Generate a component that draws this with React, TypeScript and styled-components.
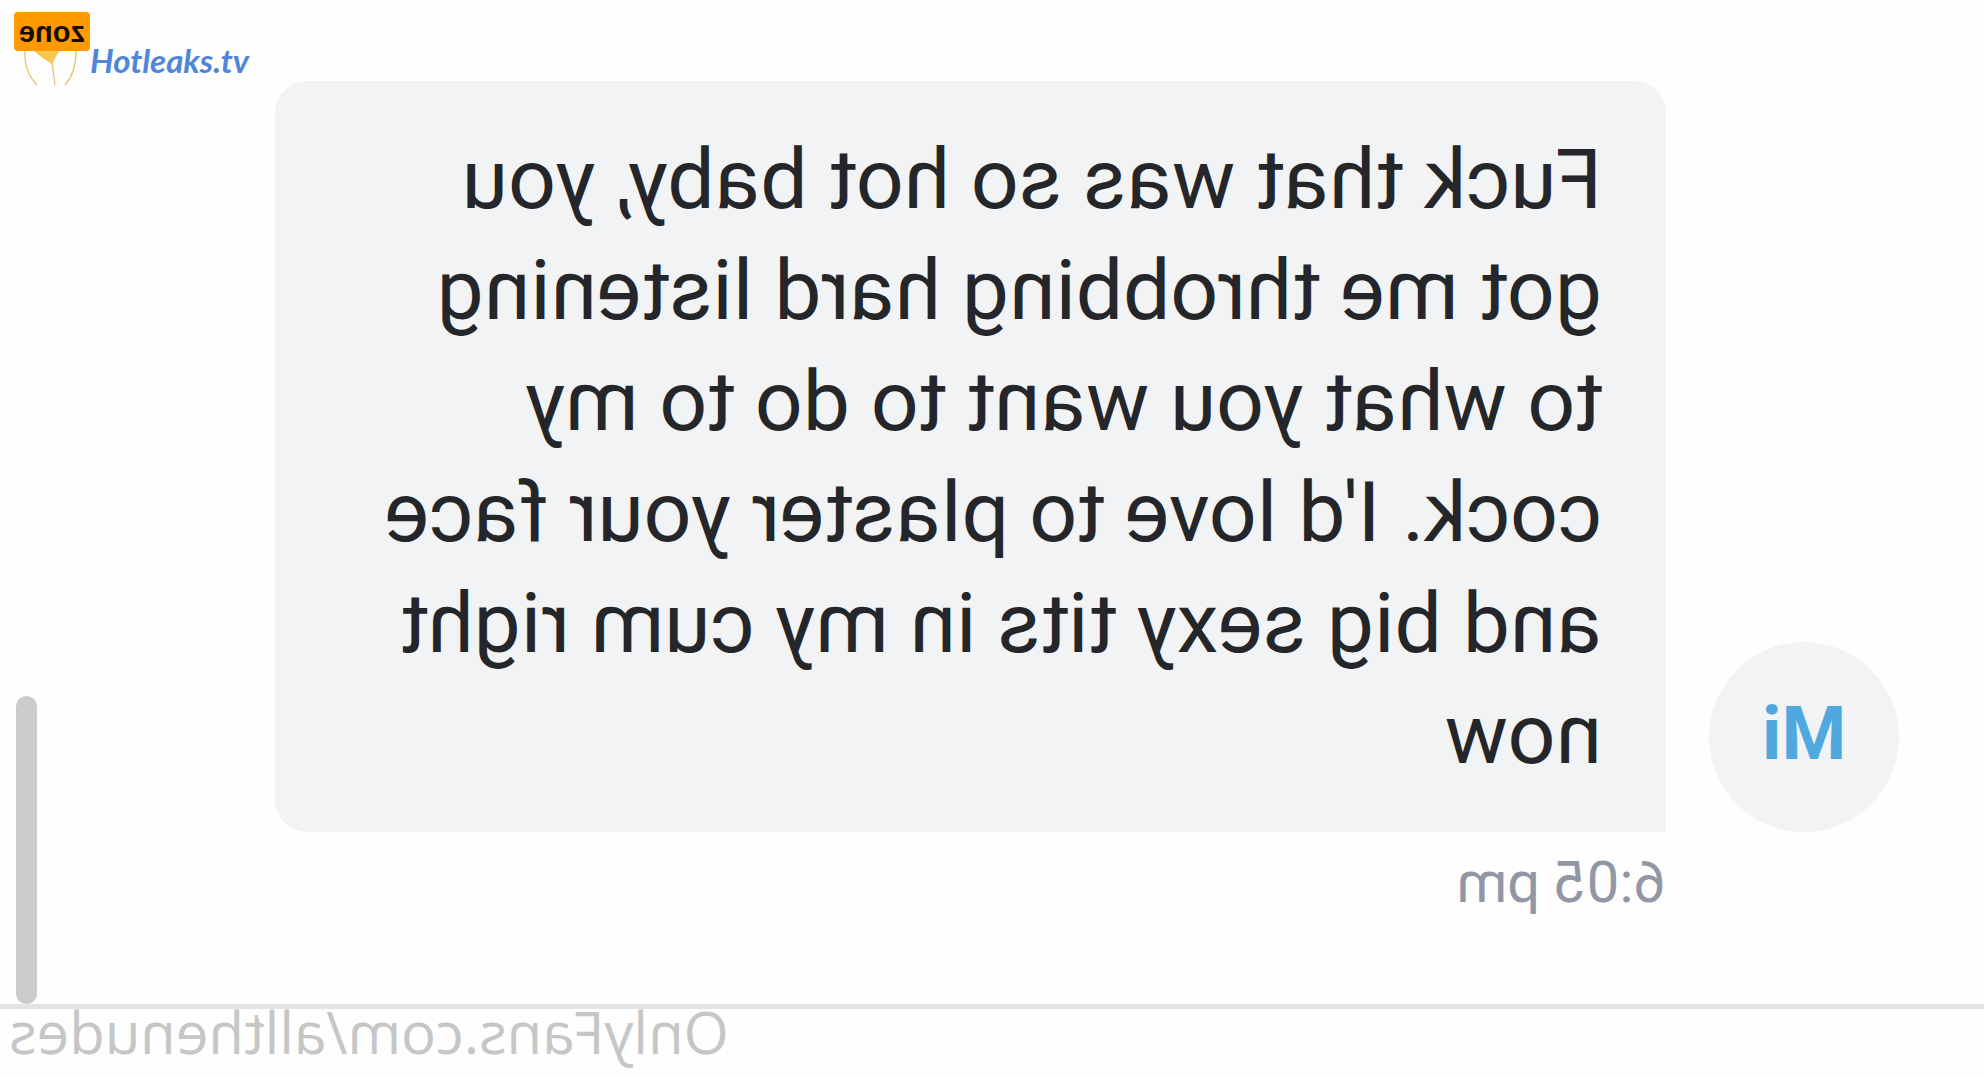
import React from "react";
import styled, { createGlobalStyle } from "styled-components";

const GlobalStyle = createGlobalStyle`
  *, *::before, *::after { box-sizing: border-box; }
  body {
    margin: 0;
    background: #fefefe;
    font-family: Roboto, "Liberation Sans", sans-serif;
  }
`;

const Page = styled.div`
  position: relative;
  min-height: 100vh;
  overflow: hidden;
`;

/* The whole conversation is shown flipped, as from a front camera. */
const Mirror = styled.div`
  display: flex;
  flex-direction: column;
  min-height: 100vh;
  transform: scaleX(-1);
`;

const Conversation = styled.main`
  position: relative;
  flex: 1;
  padding: 81px 275px 0 85px;
`;

const MessageRow = styled.article`
  display: grid;
  grid-template-columns: 190px 1fr;
  column-gap: 43px;
  align-items: end;
`;

const Avatar = styled.div`
  display: flex;
  align-items: center;
  justify-content: center;
  height: 190px;
  padding-bottom: 6px;
  border-radius: 50%;
  background: #f1f3f4;
  color: #4fa9df;
  font-size: 74px;
  line-height: 88px;
  font-weight: 700;
`;

const Bubble = styled.p`
  margin: 0;
  padding: 43px 96px 42px 64px;
  border-radius: 32px 32px 32px 0;
  background: #f1f3f4;
  color: #242629;
  font-size: 84px;
  line-height: 111px;
`;

const Time = styled.time`
  grid-column: 2;
  padding-top: 16px;
  color: #9297a6;
  font-size: 58px;
  line-height: 68px;
`;

const ScrollThumb = styled.div`
  position: absolute;
  right: 16px;
  bottom: 0;
  width: 21px;
  height: 308px;
  border-radius: 11px;
  background: #cbcbcb;
`;

const Footer = styled.footer`
  display: flex;
  justify-content: flex-end;
  height: 74px;
  padding-right: 9px;
  border-top: 5px solid #e3e4e4;
  color: #c6c6c6;
  font: 400 58px/46px "Open Sans", sans-serif;
`;

const Brand = styled.header`
  position: absolute;
  top: 12px;
  left: 14px;
  display: flex;
  align-items: flex-start;
`;

const Emblem = styled.div`
  width: 76px;
`;

const Zone = styled.div`
  height: 39px;
  border-radius: 4px;
  background: #ff9a00;
  color: #190d00;
  font: 700 29px/40px "Liberation Sans", sans-serif;
  text-align: center;
  transform: scaleX(-1);
`;

const Figure = styled.svg`
  display: block;
`;

const SiteName = styled.span`
  padding-top: 26px;
  color: #4f86d9;
  font: italic 700 33px/44px Lato, "Open Sans", sans-serif;
`;

export default function App() {
  return (
    <Page>
      <GlobalStyle />
      <Mirror>
        <Conversation>
          <MessageRow>
            <Avatar>Mi</Avatar>
            <Bubble>
              Fuck that was so hot baby, you got me throbbing hard listening to
              what you want to do to my cock. I'd love to plaster your face and
              big sexy tits in my cum right now
            </Bubble>
            <Time>6:05 pm</Time>
          </MessageRow>
          <ScrollThumb />
        </Conversation>
        <Footer>OnlyFans.com/allthenudes</Footer>
      </Mirror>
      <Brand>
        <Emblem>
          <Zone>zone</Zone>
          <Figure width="76" height="36" viewBox="0 0 76 36" fill="none" aria-hidden="true">
            <path d="M20 0H45L38 13Q29 8 20 0Z" fill="#f8c84e" />
            <path d="M11 0C10 12 14 25 23 34M62 0C62 12 59 25 51 34M38 11L41 34" stroke="#e3c468" strokeWidth="1.3" />
          </Figure>
        </Emblem>
        <SiteName>Hotleaks.tv</SiteName>
      </Brand>
    </Page>
  );
}
